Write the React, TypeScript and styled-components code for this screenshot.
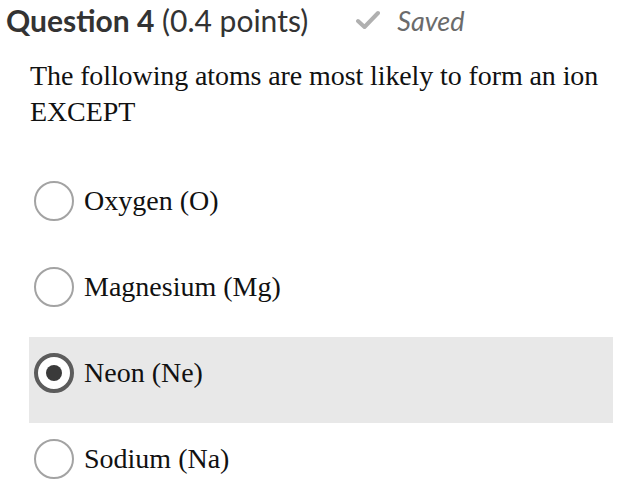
import styled, { createGlobalStyle } from "styled-components";

const GlobalStyle = createGlobalStyle`
  html, body {
    margin: 0;
    padding: 0;
    background: #ffffff;
  }
`;

type Option = { id: string; label: string };

const options: Option[] = [
  { id: "o", label: "Oxygen (O)" },
  { id: "mg", label: "Magnesium (Mg)" },
  { id: "ne", label: "Neon (Ne)" },
  { id: "na", label: "Sodium (Na)" },
];

const selectedId = "ne";

const App = () => {
  return (
    <>
      <GlobalStyle />
      <Page>
        <Header>
          <Title>
            <strong>Question 4</strong> (0.4 points)
          </Title>
          <SavedStatus>
            <CheckIcon viewBox="0 0 24 20">
              <path d="M2 11 L8.5 17 L22 3" />
            </CheckIcon>
            <span>Saved</span>
          </SavedStatus>
        </Header>

        <Prompt>
          The following atoms are most likely to form an ion EXCEPT
        </Prompt>

        <Choices>
          {options.map((o) => (
            <Choice key={o.id} selected={o.id === selectedId}>
              <Radio selected={o.id === selectedId} />
              <ChoiceLabel>{o.label}</ChoiceLabel>
            </Choice>
          ))}
        </Choices>
      </Page>
    </>
  );
};

const Page = styled.div`
  width: 617px;
  height: 484px;
  overflow: hidden;
  background: #fff;
`;

const Header = styled.div`
  display: flex;
  align-items: center;
  padding: 2px 0 0 6px;
  height: 36px;
`;

const Title = styled.h2`
  margin: 0;
  font-family: Lato, "Noto Sans", sans-serif;
  font-size: 30px;
  font-weight: 400;
  color: #333;
  white-space: nowrap;

  strong {
    font-weight: 700;
  }
`;

const SavedStatus = styled.div`
  display: flex;
  align-items: center;
  gap: 17px;
  margin-left: 48px;
  font-family: Lato, "Noto Sans", sans-serif;
  font-style: italic;
  font-size: 27px;
  color: #6b6b6b;
`;

const CheckIcon = styled.svg`
  width: 24px;
  height: 20px;
  fill: none;
  stroke: #b0b0b0;
  stroke-width: 4;
  stroke-linecap: round;
  stroke-linejoin: round;
`;

const Prompt = styled.p`
  margin: 20px 0 0 30px;
  font-family: "Liberation Serif", "Times New Roman", serif;
  font-size: 28px;
  letter-spacing: -0.1px;
  line-height: 36px;
  color: #111;
`;

const Choices = styled.div`
  display: flex;
  flex-direction: column;
  margin: 35px 4px 0 29px;
`;

const Choice = styled.div<{ selected?: boolean }>`
  display: flex;
  align-items: flex-start;
  gap: 10px;
  height: 86px;
  box-sizing: border-box;
  padding: 16px 0 0 5px;
  background: ${(p) => (p.selected ? "#e8e8e8" : "transparent")};
`;

const Radio = styled.span<{ selected?: boolean }>`
  flex: none;
  width: 40px;
  height: 40px;
  box-sizing: border-box;
  border-radius: 50%;
  background: #fff;
  border: ${(p) => (p.selected ? "4px solid #5c5c5c" : "2px solid #a3a3a3")};
  display: flex;
  align-items: center;
  justify-content: center;

  &::after {
    content: "";
    display: ${(p) => (p.selected ? "block" : "none")};
    width: 16px;
    height: 16px;
    border-radius: 50%;
    background: #3a3a3a;
  }
`;

const ChoiceLabel = styled.span`
  font-family: "Liberation Serif", "Times New Roman", serif;
  font-size: 28px;
  line-height: 40px;
  color: #111;
`;

export default App;
